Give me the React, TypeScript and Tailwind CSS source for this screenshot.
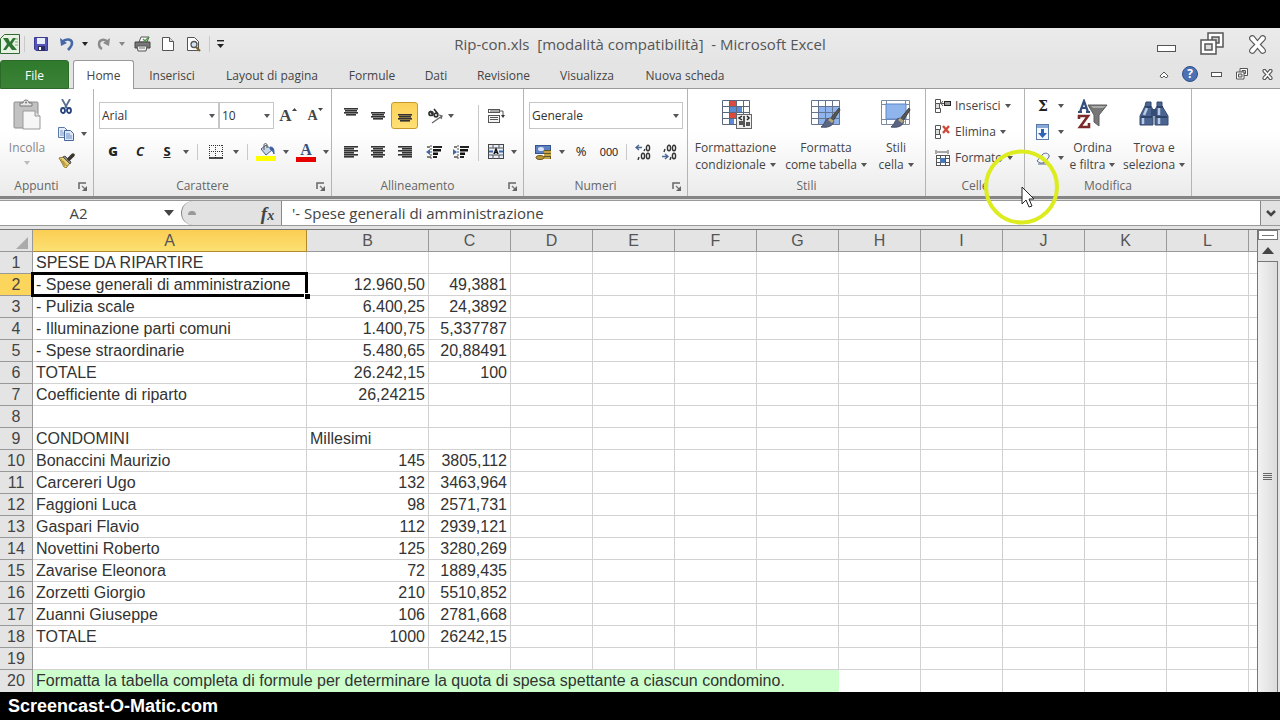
import React, { useState } from 'react';
import { clsx } from 'clsx';

const COLUMNS = ['A', 'B', 'C', 'D', 'E', 'F', 'G', 'H', 'I', 'J', 'K', 'L'];

const ROWS: [string, string, string][] = [
  ['SPESE DA RIPARTIRE', '', ''],
  ['- Spese generali di amministrazione', '12.960,50', '49,3881'],
  ['- Pulizia scale', '6.400,25', '24,3892'],
  ['- Illuminazione parti comuni', '1.400,75', '5,337787'],
  ['- Spese straordinarie', '5.480,65', '20,88491'],
  ['TOTALE', '26.242,15', '100'],
  ['Coefficiente di riparto', '26,24215', ''],
  ['', '', ''],
  ['CONDOMINI', 'Millesimi', ''],
  ['Bonaccini Maurizio', '145', '3805,112'],
  ['Carcereri Ugo', '132', '3463,964'],
  ['Faggioni Luca', '98', '2571,731'],
  ['Gaspari Flavio', '112', '2939,121'],
  ['Novettini Roberto', '125', '3280,269'],
  ['Zavarise Eleonora', '72', '1889,435'],
  ['Zorzetti Giorgio', '210', '5510,852'],
  ['Zuanni Giuseppe', '106', '2781,668'],
  ['TOTALE', '1000', '26242,15'],
  ['', '', ''],
];

const TABS = [
  { name: 'Inserisci', width: 'w-[76px]' },
  { name: 'Layout di pagina', width: 'w-[124px]' },
  { name: 'Formule', width: 'w-[76px]' },
  { name: 'Dati', width: 'w-[52px]' },
  { name: 'Revisione', width: 'w-[83px]' },
  { name: 'Visualizza', width: 'w-[84px]' },
  { name: 'Nuova scheda', width: 'w-[112px]' },
];

interface ToolProps {
  label: string;
  className?: string;
  children: React.ReactNode;
}

const Tool: React.FC<ToolProps> = ({ label, className, children }) => (
  <button type="button" aria-label={label} className={clsx('flex shrink-0 items-center justify-center', className)}>
    {children}
  </button>
);

const Arrow: React.FC<{ className?: string }> = ({ className = 'text-[#555]' }) => (
  <svg width="6" height="4" viewBox="0 0 6 4" className={clsx('shrink-0', className)} aria-hidden="true">
    <path d="M0 0h6L3 4z" fill="currentColor" />
  </svg>
);

const Launcher = ({ label }: { label: string }) => (
  <Tool label={label} className="h-5 w-5">
    <svg width="10" height="9" viewBox="0 0 10 9">
      <path d="M1 7V1h7" fill="none" stroke="#666" strokeWidth="1.500" />
      <path d="M4 4l3 3" stroke="#777" strokeWidth="1.200" />
      <path d="M9 4v5H4z" fill="#666" />
    </svg>
  </Tool>
);

const VLine = ({ className }: { className?: string }) => <span className={clsx('w-px shrink-0 bg-[#c9c9c9]', className)} />;

interface GroupProps {
  title: string;
  className: string;
  launcher?: boolean;
  children: React.ReactNode;
}

const Group: React.FC<GroupProps> = ({ title, className, launcher, children }) => (
  <section className={clsx('flex shrink-0 flex-col border-r border-[#b4b4b4]', className)}>
    <div className="flex h-[87px] items-start pt-1">{children}</div>
    <div className="flex h-5 items-center">
      <h2 className="flex-1 text-center text-[#666]">{title}</h2>
      {launcher && <Launcher label={'Opzioni ' + title} />}
    </div>
  </section>
);

interface PickerProps {
  label: string;
  options: string[];
  className: string;
}

const Picker: React.FC<PickerProps> = ({ label, options, className }) => (
  <div className={clsx('relative h-[27px] shrink-0', className)}>
    <select
      aria-label={label}
      className="h-full w-full appearance-none border border-[#c6c6c6] bg-white pl-[2px] text-[12px] text-[#333] outline-none"
    >
      {options.map((o) => (
        <option key={o}>{o}</option>
      ))}
    </select>
    <span className="pointer-events-none absolute inset-y-0 right-1 flex items-center">
      <Arrow />
    </span>
  </div>
);

// Horizontal bars used by every alignment icon: [x, width] for each line
const Bars = ({ lines }: { lines: [number, number][] }) => (
  <svg width="16" height={lines.length * 2 + 1} viewBox={`0 0 16 ${lines.length * 2 + 1}`}>
    {lines.map(([x, w], i) => (
      <rect key={i} x={x} y={i * 2} width={w} height="1.600" fill="#333" />
    ))}
  </svg>
);

const CENTERED: [number, number][] = [[1, 14], [2, 12], [1, 14], [3, 10]];
const LEFT: [number, number][] = [[1, 14], [1, 10], [1, 14], [1, 10], [1, 14], [1, 10]];
const CENTER: [number, number][] = [[1, 14], [3, 10], [1, 14], [3, 10], [1, 14], [3, 10]];
const RIGHT: [number, number][] = [[1, 14], [5, 10], [1, 14], [5, 10], [1, 14], [5, 10]];

const IndentIcon = ({ flip }: { flip?: boolean }) => (
  <svg width="16" height="16" viewBox="0 0 16 16">
    <path d="M5 1v14" stroke="#555" strokeDasharray="2 1" />
    <path d="M1 3h3M1 13h4" stroke="#555" strokeWidth="1.500" />
    <path d={flip ? 'M0 5v6l4-3z' : 'M4 5v6L0 8z'} fill="#3c6aa8" />
    <path d="M7 3h9M7 13h4" stroke="#222" strokeWidth="1.800" />
    <path d="M7 6.300h8M7 9.700h5" stroke="#111" strokeWidth="2.600" />
  </svg>
);

const PasteIcon = () => (
  <svg width="28" height="31" viewBox="0 0 28 31">
    <rect x="1" y="3" width="24" height="26" rx="1" fill="#c2c2c2" stroke="#8e8e8e" />
    <path d="M7 7V4h3c0-4 6-4 6 0h3v3z" fill="#e6e6e6" stroke="#777" />
    <circle cx="13" cy="3.500" r="1" fill="#777" />
    <path d="M10 12h12l5 5v13H10z" fill="#f6f6f6" stroke="#999" />
    <path d="M22 12v5h5" fill="#ddd" stroke="#999" />
  </svg>
);

const ScissorsIcon = () => (
  <svg width="12" height="15" viewBox="0 0 12 15">
    <path d="M2 0l5 9M10 0L5 9" stroke="#5a6f92" strokeWidth="1.800" />
    <ellipse cx="3" cy="11.500" rx="2" ry="2.500" fill="none" stroke="#25437d" strokeWidth="1.800" />
    <ellipse cx="9" cy="11.500" rx="2" ry="2.500" fill="none" stroke="#25437d" strokeWidth="1.800" />
  </svg>
);

const CopyIcon = () => (
  <svg width="16" height="14" viewBox="0 0 16 14">
    <path d="M.5.500h6l3 3v7h-9z" fill="#e6eefa" stroke="#5a78a8" />
    <path d="M2 4h3M2 6h4M2 8h4" stroke="#7a98c8" />
    <path d="M6.500 3.500h6l3 3v7h-9z" fill="#dce8f8" stroke="#46659a" />
    <path d="M8 7h4M8 9h6M8 11h6" stroke="#6e8ec2" />
  </svg>
);

const PainterIcon = () => (
  <svg width="17" height="15" viewBox="0 0 17 15">
    <path d="M1 5l5-1 6 6-4 5c-2 0-3-3-4-5z" fill="#e9d070" stroke="#8d7830" />
    <path d="M5 8l4 5M3 6l4 7" stroke="#a98c2e" />
    <path d="M5 4l2-1 6 6-1 2z" fill="#8d8d8d" stroke="#555" />
    <path d="M11 6l4-4" stroke="#39342c" strokeWidth="3.500" strokeLinecap="round" />
  </svg>
);

const BordersIcon = () => (
  <svg width="14" height="14" viewBox="0 0 14 14">
    <path d="M0 .5h14M.5 0v13M13.500 0v13M6.500 0v13M0 6.500h14" stroke="#333" strokeDasharray="1 1" />
    <path d="M0 13h14" stroke="#222" strokeWidth="1.600" />
  </svg>
);

const FillIcon = () => (
  <svg width="20" height="18" viewBox="0 0 20 18">
    <path d="M5 6l5-4 6 5-6 5z" fill="#c7d5ea" stroke="#4a5f80" />
    <path d="M8 7V2c0-2 3-2 3 0v3" fill="none" stroke="#555" />
    <path d="M14 4c4 0 4 3 4 7-1-3-2-4-3-4z" fill="#3a5fa0" stroke="#3a5fa0" />
    <rect y="13" width="20" height="5" fill="#ffff00" />
  </svg>
);

const MergeIcon = () => (
  <svg width="17" height="16" viewBox="0 0 17 16">
    <rect x=".5" y=".5" width="15" height="14" fill="#e8eef7" stroke="#444" />
    <path d="M0 4h16M0 11h16M5 0v4M11 0v4M5 11v4M11 11v4" stroke="#555" />
    <path d="M1 7.500h4M15 7.500h-4" stroke="#3c6aa8" strokeWidth="2" />
    <path d="M6 10l2-5 2 5M7 8.500h2" fill="none" stroke="#111" strokeWidth="1.400" />
  </svg>
);

const WrapIcon = () => (
  <svg width="17" height="16" viewBox="0 0 17 16">
    <rect x=".5" y="1.500" width="11" height="3" fill="#fff" stroke="#555" />
    <rect x=".5" y="7.500" width="11" height="7" fill="#f4f4f4" stroke="#555" />
    <path d="M2 3h13v4M2 9.500h8M2 11.500h8" fill="none" stroke="#555" />
    <path d="M13 7h4l-2 3z" fill="#333" />
  </svg>
);

const OrientationIcon = () => (
  <svg width="17" height="16" viewBox="0 0 17 16">
    <g fill="none" stroke="#333" strokeWidth="1.700">
      <circle cx="4" cy="5.500" r="2" />
      <path d="M3 3l3 4M7 1l4 5" />
      <circle cx="9" cy="7" r="1.800" />
    </g>
    <path d="M5 15L15 8M12 7l3 1-1 3" fill="none" stroke="#666" strokeWidth="1.300" />
  </svg>
);

const CurrencyIcon = () => (
  <svg width="17" height="17" viewBox="0 0 17 17">
    <rect x=".5" y="1.500" width="15" height="8" fill="#5d80c4" stroke="#34548e" />
    <ellipse cx="6" cy="5" rx="3" ry="2" fill="#d9e5f7" />
    <path d="M9 6h7v9H9z" fill="#66572a" />
    <path d="M9 8h7M9 11h7M8 14h7" stroke="#dfbf50" strokeWidth="1.600" />
    <ellipse cx="5" cy="13.500" rx="4" ry="2" fill="#bf9935" stroke="#6a5520" />
  </svg>
);

const DecimalIcon = ({ more }: { more?: boolean }) => (
  <svg width="16" height="16" viewBox="0 0 16 16" fill="none" stroke="#333" strokeWidth="1.400">
    <path d={more ? 'M1 3.500h6M4 1L1 3.500 4 6' : 'M1 12.500h6M4 10l3 2.500L4 15'} stroke="#4a6590" />
    {more ? (
      <>
        <path d="M9 7l1-2M3 16l1-3" />
        <ellipse cx="13" cy="4" rx="1.600" ry="2.800" />
        <ellipse cx="8" cy="12" rx="1.600" ry="2.800" />
        <ellipse cx="13" cy="12" rx="1.600" ry="2.800" />
      </>
    ) : (
      <>
        <path d="M3 8l1-3M9 16l1-3" />
        <ellipse cx="8" cy="4" rx="1.600" ry="2.800" />
        <ellipse cx="13" cy="4" rx="1.600" ry="2.800" />
        <ellipse cx="13" cy="12" rx="1.600" ry="2.800" />
      </>
    )}
  </svg>
);

const Brush = () => (
  <g>
    <path d="M29 9l1 2-7 11-3-2z" fill="#555" stroke="#444" />
    <path d="M20 19l4 3c-1 5-6 7-13 6 4-2 3-8 9-9z" fill="#5c6684" stroke="#444d68" />
    <path d="M20 19l4 3-2 2-4-3z" fill="#b5a878" />
  </g>
);

const ConditionalIcon = () => (
  <svg width="32" height="31" viewBox="0 0 32 31">
    <rect x="2" y="1" width="28" height="25" fill="#fff" />
    <path d="M9 1h7v6H9zM9 14h7v6H9z" fill="#dc4a3f" />
    <path d="M9 7h13v7H9zM9 20h5v6H9z" fill="#5c8bd6" />
    <path d="M2.500 1.500h27v24h-27zM2 7.500h28M2 13.500h28M2 19.500h28M9.500 1v25M16.500 1v25M23.500 1v25" fill="none" stroke="#59677f" />
    <rect x="16.500" y="15.500" width="15" height="14" fill="#eee" stroke="#666" />
    <path d="M22 17l-3 2 3 2M19 23h4M19 25h4M27 17l2 2-2 2M26 24h4M26 26h4M24 17v11" fill="none" stroke="#222" strokeWidth="1.500" />
  </svg>
);

const TableStyleIcon = () => (
  <svg width="32" height="31" viewBox="0 0 32 31">
    <rect x="1" y="1" width="29" height="25" fill="#fff" />
    <path d="M8 7h22v19H8z" fill="#8fb5ec" />
    <path d="M1.500 1.500h28v24h-28zM1 7.500h29M1 13.500h29M1 19.500h29M8.500 1v25M15.500 1v25M22.500 1v25" fill="none" stroke="#66758f" />
    <Brush />
  </svg>
);

const CellStyleIcon = () => (
  <svg width="32" height="31" viewBox="0 0 32 31">
    <path d="M1.500 1.500h28v24h-28zM1 5.500h29M1 20.500h29M6.500 1v25M25.500 1v25" fill="#fff" stroke="#7d8ba3" />
    <rect x="6" y="5" width="20" height="15" fill="#8fb5ec" stroke="#5f88c8" />
    <Brush />
  </svg>
);

const SortIcon = () => (
  <svg width="32" height="31" viewBox="0 0 32 31">
    <path d="M11 6h19L22 16v11l-5-4v-7z" fill="#777" stroke="#5c5c5c" />
    <path d="M14 7h15l-3 2H16z" fill="#aaa" />
    <path d="M3 13L7 2l4 11M4 9h6M1 13h4M9 13h4" fill="none" stroke="#354f7d" strokeWidth="2.200" />
    <path d="M2 20v-3h9L3 28h9v-4" fill="none" stroke="#7d2a2a" strokeWidth="2.600" />
  </svg>
);

const BinocularsIcon = () => (
  <svg width="30" height="28" viewBox="0 0 30 28">
    <path d="M7 3h5v4l2 4v15H1V17L6 7zM18 3h5v4l6 10v9H16V11l2-4z" fill="#4a6591" stroke="#34486c" />
    <path d="M12 10h6v7h-6z" fill="#354c75" />
    <path d="M2 18h11M17 18h11M6 8h6M18 8h6" stroke="#26395b" strokeWidth="1.500" />
    <path d="M4 19v6M20 19v6M8 9l-3 7M20 9v7" stroke="#b9cae6" strokeWidth="2.500" />
  </svg>
);

const CellsIcon = ({ kind }: { kind: string }) => (
  <svg width="17" height="16" viewBox="0 0 17 16" fill="none" stroke="#555">
    {kind === 'Formato' ? (
      <>
        <path d="M2 0v4M14 0v4M3 2h10" />
        <rect x="2.500" y="5.500" width="13" height="10" fill="#fff" />
        <path d="M2 8.500h14M2 12.500h14M6.500 5v11M11.500 5v11" />
        <rect x="6" y="8" width="5" height="5" fill="#4a78b8" stroke="none" />
      </>
    ) : (
      <>
        <path d="M1.500 1.500h5v4h-5zM1.500 10.500h5v4h-5z" fill="#fff" />
        <path d="M1.500 5.500h4v5h-4z" fill="#ddd" />
        {kind === 'Inserisci' ? (
          <>
            <path d="M7 5.500h4M9 3L7 5.500 9 8" />
            <rect x="10.500" y="3.500" width="6" height="4" fill="#999" stroke="#222" />
          </>
        ) : (
          <path d="M9 2l6 7M15 2L9 9" stroke="#cf4a3a" strokeWidth="2.400" />
        )}
      </>
    )}
  </svg>
);

const FillDownIcon = () => (
  <svg width="14" height="16" viewBox="0 0 14 16">
    <rect x=".5" y=".5" width="12" height="15" fill="#f5f8fd" stroke="#5c7aa8" />
    <rect x="1" y="1" width="11" height="3" fill="#8ba9d8" />
    <path d="M5 5h3v4h3l-4.500 5L2 9h3z" fill="#2c62b8" />
  </svg>
);

const EraserIcon = () => (
  <svg width="15" height="13" viewBox="0 0 15 13">
    <path d="M1 9l6-7c3-2 7 0 6 3l-5 6H4z" fill="#f2f4f8" stroke="#5b6c8c" />
    <path d="M4 6c3 0 4 2 4 5M2 12h12" fill="none" stroke="#5b6c8c" />
  </svg>
);

interface BigToolProps {
  lines: [string, string];
  icon: React.ReactNode;
  className: string;
}

const BigTool: React.FC<BigToolProps> = ({ lines, icon, className }) => (
  <button type="button" className={clsx('flex shrink-0 flex-col items-center pt-[6px] leading-[17px]', className)}>
    <span className="flex h-10 items-start justify-center">{icon}</span>
    <span>{lines[0]}</span>
    <span className="flex items-center gap-1 whitespace-nowrap">
      {lines[1]}
      <Arrow />
    </span>
  </button>
);

const Restore = ({ size }: { size: number }) => (
  <svg width={size} height={size} viewBox="0 0 24 24" fill="#fff" stroke="#555" strokeWidth={size > 16 ? 1.5 : 2}>
    <path d="M8 1h15v14H8z" />
    <path d="M12 5h7v6h-7z" fill="#ccc" />
    <path d="M1 8h15v14H1z" />
    <path d="M5 12h7v6H5z" fill="#ddd" />
  </svg>
);

const Cross = ({ size }: { size: number }) => (
  <svg width={size} height={size} viewBox="0 0 20 20" fill="#fff" stroke="#555" strokeWidth={size > 16 ? 1.2 : 2}>
    <path d="M2 2q2-2 4-1l4 5 4-5q2-1 4 1 1 2-1 4l-4 4 4 4q2 2 1 4-2 2-4 1l-4-5-4 5q-2 1-4-1-1-2 1-4l4-4-4-4q-2-2-1-4z" />
  </svg>
);

const TitleBar = () => (
  <header className="flex h-8 items-center bg-gradient-to-b from-[#ebebeb] to-[#e5e5e5]">
    <div className="flex flex-1 items-center">
      <Tool label="Excel" className="w-5">
        <svg width="20" height="20" viewBox="0 0 20 20">
          <path d="M.5 4.500l4-4h15v19H.500z" fill="#e8f2e4" stroke="#2f6b31" />
          <path d="M3 4h5l2 4 3-4h3l-4 6 5 6h-5l-3-4-3 4H3l4-6z" fill="#2e7432" />
          <path d="M15 5h3M15 8h3M15 11h3" stroke="#7aaa78" />
        </svg>
      </Tool>
      <VLine className="ml-1 h-4 bg-[#888]" />
      <Tool label="Salva" className="w-8">
        <svg width="14" height="14" viewBox="0 0 14 14">
          <path d="M.5.500h13v13H2l-1.500-1.500z" fill="#5356b8" stroke="#3a3d8f" />
          <rect x="3" y="1" width="8" height="6" fill="#e9edf8" />
          <rect x="4" y="9" width="7" height="5" fill="#2b2d63" />
          <rect x="5" y="10" width="2" height="3" fill="#fff" />
        </svg>
      </Tool>
      <Tool label="Annulla" className="w-5">
        <svg width="14" height="14" viewBox="0 0 14 14">
          <path d="M2 5c4-4 10-3 10 1 0 3-2 5-4 7" fill="none" stroke="#4668a8" strokeWidth="2.600" />
          <path d="M0 1l1 8 6-3z" fill="#4668a8" />
        </svg>
      </Tool>
      <Tool label="Elenco annulla" className="w-4">
        <Arrow className="text-[#222]" />
      </Tool>
      <Tool label="Ripeti" className="w-[22px]">
        <svg width="14" height="14" viewBox="0 0 14 14">
          <path d="M11 5C7 1 2 3 2 7c0 2 1 4 3 5" fill="none" stroke="#8b8b8b" strokeWidth="2.400" />
          <path d="M13 1l-1 8-6-3z" fill="#8b8b8b" />
        </svg>
      </Tool>
      <Tool label="Elenco ripeti" className="w-[14px]">
        <Arrow className="text-[#888]" />
      </Tool>
      <Tool label="Stampa" className="w-[26px]">
        <svg width="17" height="16" viewBox="0 0 17 16">
          <path d="M5 6l2-5h8l-2 5z" fill="#fff" stroke="#555" />
          <path d="M1 6h15v6H1z" fill="#777" stroke="#444" />
          <path d="M3 10h10l-1 5H4z" fill="#f2f2f2" stroke="#555" />
          <path d="M9 3l2 2 4-4" fill="none" stroke="#4d9a45" strokeWidth="1.500" />
          <path d="M5 12h6" stroke="#777" />
        </svg>
      </Tool>
      <Tool label="Nuovo" className="w-[26px]">
        <svg width="12" height="14" viewBox="0 0 12 14">
          <path d="M.5.500h7l4 4v9H.500z" fill="#fff" stroke="#555" />
          <path d="M7.500.500v4h4" fill="#ddd" stroke="#555" />
        </svg>
      </Tool>
      <Tool label="Anteprima di stampa" className="w-[26px]">
        <svg width="16" height="15" viewBox="0 0 16 15">
          <path d="M1.500.500h7l4 4v9h-11z" fill="#fff" stroke="#555" />
          <circle cx="8" cy="7.500" r="3" fill="#d4e2f4" stroke="#555" strokeWidth="1.300" />
          <path d="M10 10l4 4" stroke="#7a6030" strokeWidth="2.200" />
        </svg>
      </Tool>
      <VLine className="ml-[2px] h-4 bg-[#888]" />
      <Tool label="Personalizza barra" className="ml-1 w-3">
        <svg width="7" height="8" viewBox="0 0 7 8">
          <path d="M0 .7h7" stroke="#222" strokeWidth="1.400" />
          <path d="M0 4h7L3.500 8z" fill="#222" />
        </svg>
      </Tool>
    </div>
    <h1 className="text-[15px] whitespace-pre text-[#555]">Rip-con.xls  [modalità compatibilità]  - Microsoft Excel</h1>
    <div className="flex flex-1 items-center justify-end">
      <Tool label="Riduci a icona" className="mt-2 w-[46px]">
        <span className="h-[7px] w-[19px] border border-[#555] bg-white" />
      </Tool>
      <Tool label="Ripristina" className="w-[46px]">
        <Restore size={24} />
      </Tool>
      <Tool label="Chiudi" className="w-[45px]">
        <Cross size={19} />
      </Tool>
    </div>
  </header>
);

const TabBar = () => (
  <nav className="flex h-[29px] bg-[#e4e4e4] text-[13px]">
    <button type="button" className="w-[69px] rounded-t-[3px] border border-[#2c6a2a] bg-gradient-to-b from-[#2f7a2c] to-[#3b8237] pt-[2px] text-[12px] text-white">
      File
    </button>
    <div className="w-1 border-b border-[#999]" />
    <button type="button" className="w-[61px] rounded-t-[3px] border border-b-0 border-[#999] bg-white pt-[2px] text-[12px] text-[#444]">
      Home
    </button>
    {TABS.map((tab) => (
      <button key={tab.name} type="button" className={clsx('border-b border-[#999] pt-1 text-[12px] font-medium whitespace-nowrap text-[#444]', tab.width)}>
        {tab.name}
      </button>
    ))}
    <div className="flex flex-1 items-center justify-end border-b border-[#999]">
      <Tool label="Riduci barra multifunzione" className="w-[26px]">
        <svg width="10" height="7" viewBox="0 0 10 7">
          <path d="M1 5l4-4 4 4-1 1.500H6.500L5 5 3.500 6.500H2z" fill="#fff" stroke="#555" />
        </svg>
      </Tool>
      <Tool label="Guida" className="w-[26px]">
        <span className="flex h-4 w-4 items-center justify-center rounded-full border border-[#2f4f86] bg-[#4c72b4] text-[12px] font-bold text-white">?</span>
      </Tool>
      <Tool label="Riduci finestra" className="w-[26px]">
        <span className="h-[5px] w-[11px] border border-[#555] bg-white" />
      </Tool>
      <Tool label="Ripristina finestra" className="w-[26px]">
        <Restore size={12} />
      </Tool>
      <Tool label="Chiudi finestra" className="w-[25px]">
        <Cross size={11} />
      </Tool>
    </div>
  </nav>
);

const Ribbon = () => (
  <div className="relative flex h-[110px] border-b-[3px] border-[#858585] bg-gradient-to-b from-white from-40% to-[#ebebeb] text-[12px] text-[#444]">
    <Group title="Appunti" className="w-[94px]" launcher>
      <button type="button" className="flex w-[54px] flex-col items-center pt-[6px] leading-[17px] text-[#888]">
        <span className="h-10">
          <PasteIcon />
        </span>
        Incolla
        <Arrow className="mt-[5px] text-[#bbb]" />
      </button>
      <div className="flex flex-col">
        <Tool label="Taglia" className="h-[27px] w-6">
          <ScissorsIcon />
        </Tool>
        <div className="flex">
          <Tool label="Copia" className="h-[27px] w-6">
            <CopyIcon />
          </Tool>
          <Tool label="Opzioni copia" className="w-3">
            <Arrow />
          </Tool>
        </div>
        <Tool label="Copia formato" className="h-[27px] w-6">
          <PainterIcon />
        </Tool>
      </div>
    </Group>

    <Group title="Carattere" className="w-[238px]" launcher>
      <div className="flex flex-col pt-[9px] pl-[5px]">
        <div className="flex">
          <Picker label="Tipo di carattere" options={['Arial', 'Calibri']} className="w-[120px]" />
          <Picker label="Dimensione carattere" options={['10', '11', '12']} className="w-[55px]" />
          <Tool label="Aumenta dimensione" className="w-[28px] font-['Liberation_Serif',serif] text-[17px] font-bold text-[#444]">
            A<svg width="5" height="3" viewBox="0 0 5 3" className="mb-3"><path d="M0 3h5L2.500 0z" fill="#444" /></svg>
          </Tool>
          <Tool label="Riduci dimensione" className="w-[26px] font-['Liberation_Serif',serif] text-[14px] font-bold text-[#444]">
            A<svg width="5" height="3" viewBox="0 0 5 3" className="mb-3"><path d="M0 0h5L2.500 3z" fill="#444" /></svg>
          </Tool>
        </div>
        <div className="mt-[10px] flex h-[26px] items-center text-[13px] text-[#222]">
          <Tool label="Grassetto" className="w-[28px] font-black">G</Tool>
          <Tool label="Corsivo" className="w-[26px] font-bold italic">C</Tool>
          <Tool label="Sottolineato" className="w-[28px] font-bold underline">S</Tool>
          <Tool label="Opzioni sottolineato" className="w-[10px]"><Arrow /></Tool>
          <VLine className="ml-[6px] h-4" />
          <Tool label="Bordi" className="w-9"><BordersIcon /></Tool>
          <Tool label="Opzioni bordi" className="w-1"><Arrow /></Tool>
          <VLine className="ml-[9px] h-4" />
          <Tool label="Colore riempimento" className="w-9"><FillIcon /></Tool>
          <Tool label="Opzioni riempimento" className="w-1"><Arrow /></Tool>
          <Tool label="Colore carattere" className="w-9 flex-col font-['Liberation_Serif',serif] text-[16px] leading-[14px] font-bold text-[#34507c]">
            A
            <span className="h-[5px] w-5 bg-[#e60000]" />
          </Tool>
          <Tool label="Opzioni colore" className="w-1"><Arrow /></Tool>
        </div>
      </div>
    </Group>

    <Group title="Allineamento" className="w-[192px]" launcher>
      <div className="flex flex-col pt-[9px] pl-[5px]">
        <div className="flex h-[27px] items-center">
          <Tool label="Allinea in alto" className="h-[27px] w-[27px] pb-[6px]"><Bars lines={CENTERED} /></Tool>
          <Tool label="Allinea al centro verticale" className="h-[27px] w-[27px] pt-[2px]"><Bars lines={CENTERED} /></Tool>
          <Tool label="Allinea in basso" className="h-[27px] w-[27px] rounded-[3px] border border-[#c79a2c] bg-gradient-to-b from-[#fbd258] to-[#ffe075] pt-[6px]">
            <Bars lines={CENTERED} />
          </Tool>
          <Tool label="Orientamento" className="ml-1 w-[27px]"><OrientationIcon /></Tool>
          <Tool label="Opzioni orientamento" className="w-1"><Arrow /></Tool>
        </div>
        <div className="mt-[10px] flex h-[26px] items-center">
          <Tool label="Allinea a sinistra" className="w-[27px]"><Bars lines={LEFT} /></Tool>
          <Tool label="Centra" className="w-[27px]"><Bars lines={CENTER} /></Tool>
          <Tool label="Allinea a destra" className="w-[27px]"><Bars lines={RIGHT} /></Tool>
          <Tool label="Riduci rientro" className="ml-[2px] w-[27px]"><IndentIcon /></Tool>
          <Tool label="Aumenta rientro" className="w-[27px]"><IndentIcon flip /></Tool>
        </div>
      </div>
      <VLine className="mt-3 ml-1 h-14" />
      <div className="flex flex-col pt-[9px] pl-[3px]">
        <Tool label="Testo a capo" className="h-[27px] w-7"><WrapIcon /></Tool>
        <div className="mt-[10px] flex h-[26px]">
          <Tool label="Unisci e centra" className="w-7"><MergeIcon /></Tool>
          <Tool label="Opzioni unisci" className="w-2"><Arrow /></Tool>
        </div>
      </div>
    </Group>

    <Group title="Numeri" className="w-[164px]" launcher>
      <div className="flex flex-col pt-[9px] pl-[5px]">
        <Picker label="Formato numero" options={['Generale', 'Numero', 'Valuta']} className="w-[154px]" />
        <div className="mt-[10px] flex h-[26px] items-center text-[#222]">
          <Tool label="Formato valuta" className="w-[28px]"><CurrencyIcon /></Tool>
          <Tool label="Opzioni valuta" className="w-[10px]"><Arrow /></Tool>
          <Tool label="Stile percentuale" className="w-[28px] text-[13px]">%</Tool>
          <Tool label="Stile separatore" className="w-[28px] font-['Liberation_Sans_Narrow','Liberation_Sans',sans-serif] text-[11px]">000</Tool>
          <VLine className="mx-[3px] h-4" />
          <Tool label="Aumenta decimali" className="w-[26px]"><DecimalIcon more /></Tool>
          <Tool label="Diminuisci decimali" className="w-[26px]"><DecimalIcon /></Tool>
        </div>
      </div>
    </Group>

    <Group title="Stili" className="w-[238px]">
      <BigTool lines={['Formattazione', 'condizionale']} icon={<ConditionalIcon />} className="w-[95px]" />
      <BigTool lines={['Formatta', 'come tabella']} icon={<TableStyleIcon />} className="w-[86px]" />
      <BigTool lines={['Stili', 'cella']} icon={<CellStyleIcon />} className="w-[54px]" />
    </Group>

    <Group title="Celle" className="w-[99px]">
      <div className="flex flex-col pl-2">
        {['Inserisci', 'Elimina', 'Formato'].map((name) => (
          <button key={name} type="button" className="flex h-[26px] items-center gap-1">
            <CellsIcon kind={name} />
            {name}
            <Arrow />
          </button>
        ))}
      </div>
    </Group>

    <Group title="Modifica" className="w-[167px]">
      <div className="flex w-[41px] flex-col pl-2">
        <button type="button" aria-label="Somma automatica" className="flex h-[26px] items-center justify-between pr-[2px] font-['DejaVu_Serif',serif] text-[14px] font-bold text-[#222]">
          <span className="w-5 text-center">Σ</span>
          <Arrow />
        </button>
        <button type="button" aria-label="Riempimento" className="flex h-[26px] items-center justify-between pr-[2px]">
          <span className="flex w-5 justify-center"><FillDownIcon /></span>
          <Arrow />
        </button>
        <button type="button" aria-label="Cancella" className="flex h-[26px] items-center justify-between pr-[2px]">
          <span className="flex w-5 justify-center"><EraserIcon /></span>
          <Arrow />
        </button>
      </div>
      <BigTool lines={['Ordina', 'e filtra']} icon={<SortIcon />} className="w-[53px]" />
      <BigTool lines={['Trova e', 'seleziona']} icon={<BinocularsIcon />} className="w-[70px]" />
    </Group>

    {/* pointer with its click highlight */}
    <svg className="pointer-events-none absolute top-[59px] left-[983px] z-10" width="78" height="78" viewBox="0 0 78 78">
      <circle cx="38.500" cy="39" r="35.500" fill="none" stroke="#dcec1e" strokeWidth="4" />
      <path d="M39 39v17l4-4 3 7 3-1-3-7h5z" fill="#fff" stroke="#222" />
    </svg>
  </div>
);

const FormulaBar = () => {
  const [formula, setFormula] = useState("'- Spese generali di amministrazione");

  return (
    <div className="border-t border-b-[3px] border-t-[#e0e0e0] border-b-[#e3e3e3] bg-white">
      <div className="flex h-[26px] border-y border-[#999] text-[15px] text-[#444]">
        <input aria-label="Casella nome" defaultValue="A2" className="w-[157px] bg-white text-center outline-none" />
        <Tool label="Elenco nomi" className="w-6">
          <svg width="10" height="6" viewBox="0 0 10 6">
            <path d="M0 0h10L5 6z" fill="#444" />
          </svg>
        </Tool>
        <div className="flex w-[101px] items-center justify-between rounded-l-full border-x border-[#888] bg-[#e2e2e2] pl-[6px]">
          <span className="h-[4px] w-2 rounded-t-full bg-[#999]" />
          <button type="button" aria-label="Inserisci funzione" className="w-[27px] font-['Liberation_Serif',serif] text-[19px] leading-none font-bold italic">
            f<span className="text-[14px]">x</span>
          </button>
        </div>
        <input
          aria-label="Barra della formula"
          value={formula}
          onChange={(e) => setFormula(e.target.value)}
          className="min-w-0 flex-1 bg-white pl-[10px] outline-none"
        />
        <Tool label="Espandi barra della formula" className="w-5 border-l border-[#888] bg-[#e2e2e2]">
          <svg width="10" height="7" viewBox="0 0 10 7">
            <path d="M1 1l4 4 4-4" fill="none" stroke="#444" strokeWidth="2.500" />
          </svg>
        </Tool>
      </div>
    </div>
  );
};

const Cell = ({ value, align }: { value: string; align?: string }) => (
  <td className={clsx('border-r border-b border-[#d2d2d2] px-[3px] whitespace-nowrap', align)}>{value}</td>
);

const Sheet = () => (
  <div className="flex border-t border-[#777] bg-white font-['Liberation_Sans',Arial,sans-serif] text-[16px] leading-[20px] text-[#333]">
    <div className="min-w-0 flex-1 overflow-hidden">
      <table className="w-full table-fixed border-separate border-spacing-0">
        <colgroup>
          <col className="w-[33px]" />
          <col className="w-[274px]" />
          <col className="w-[122px]" />
          {COLUMNS.slice(2).map((c) => (
            <col key={c} className="w-[82px]" />
          ))}
          <col />
        </colgroup>
        <thead>
          <tr className="h-[22px]">
            <th className="border-r border-b border-[#999] bg-[#e4e4e4] p-0">
              <svg width="12" height="12" viewBox="0 0 12 12" className="mt-1 ml-4">
                <path d="M12 0v12H0z" fill="#aaa" />
              </svg>
            </th>
            {COLUMNS.map((c) => (
              <th
                key={c}
                scope="col"
                className={clsx(
                  'border-r border-b p-0 font-normal text-[#555]',
                  c === 'A' ? 'border-[#b08a2c] bg-gradient-to-b from-[#fbce52] to-[#fbe072]' : 'border-[#999] bg-[#e4e4e4]',
                )}
              >
                {c}
              </th>
            ))}
            <th className="border-b border-[#999] bg-[#e4e4e4] p-0" />
          </tr>
        </thead>
        <tbody>
          {ROWS.map(([a, b, c], i) => {
            const selected = i === 1;
            return (
              <tr key={i} className="h-[22px]">
                <th
                  scope="row"
                  className={clsx(
                    'border-r border-b border-[#999] p-0 font-normal text-[#444]',
                    selected ? 'bg-[#fbd55c]' : 'bg-[#e4e4e4]',
                  )}
                >
                  {i + 1}
                </th>
                {selected ? (
                  <td className="relative border-r border-b border-[#d2d2d2] px-[3px] whitespace-nowrap">
                    {a}
                    <span className="absolute inset-[-2px] border-[3px] border-black" />
                    <span className="absolute right-[-4px] bottom-[-4px] h-[6px] w-[6px] border-t border-l border-white bg-black" />
                  </td>
                ) : (
                  <Cell value={a} />
                )}
                <Cell value={b} align={b === 'Millesimi' ? 'text-left' : 'text-right'} />
                <Cell value={c} align="text-right" />
                {COLUMNS.slice(3).map((col) => (
                  <Cell key={col} value="" />
                ))}
                <td className="border-b border-[#d2d2d2]" />
              </tr>
            );
          })}
          <tr className="h-[22px]">
            <th scope="row" className="border-r border-[#999] bg-[#e4e4e4] p-0 font-normal text-[#444]">
              20
            </th>
            <td colSpan={7} className="bg-[#ccffcc] px-[3px] whitespace-nowrap">
              Formatta la tabella completa di formule per determinare la quota di spesa spettante a ciascun condomino.
            </td>
            {COLUMNS.slice(7).map((col) => (
              <td key={col} className="border-r border-[#d2d2d2]" />
            ))}
            <td />
          </tr>
        </tbody>
      </table>
    </div>
    <div className="flex w-[23px] flex-col border-l border-[#777] bg-[#e4e4e4] pr-[2px]">
      <div className="flex h-[10px] items-center justify-center border border-[#777] bg-white">
        <span className="h-px w-3 bg-[#777]" />
      </div>
      <Tool label="Scorri in alto" className="h-[21px]">
        <svg width="12" height="7" viewBox="0 0 12 7">
          <path d="M6 0l6 7H0z" fill="#444" />
        </svg>
      </Tool>
      <div className="flex flex-1 items-center justify-center border-t border-r border-[#777] bg-gradient-to-r from-[#f2f2f2] to-[#dcdcdc]">
        <svg width="9" height="8" viewBox="0 0 9 8">
          <path d="M0 .5h9M0 2.500h9M0 4.500h9M0 6.500h9" stroke="#666" />
        </svg>
      </div>
    </div>
  </div>
);

export default function App() {
  return (
    <div className="flex min-h-screen flex-col bg-black font-['Open_Sans','Noto_Sans',sans-serif]">
      <div className="h-7 shrink-0" />
      <TitleBar />
      <TabBar />
      <Ribbon />
      <FormulaBar />
      <Sheet />
      <footer className="px-2 font-['Liberation_Sans',Arial,sans-serif] text-[18px] leading-[28px] font-bold text-white">
        Screencast-O-Matic.com
      </footer>
    </div>
  );
}
